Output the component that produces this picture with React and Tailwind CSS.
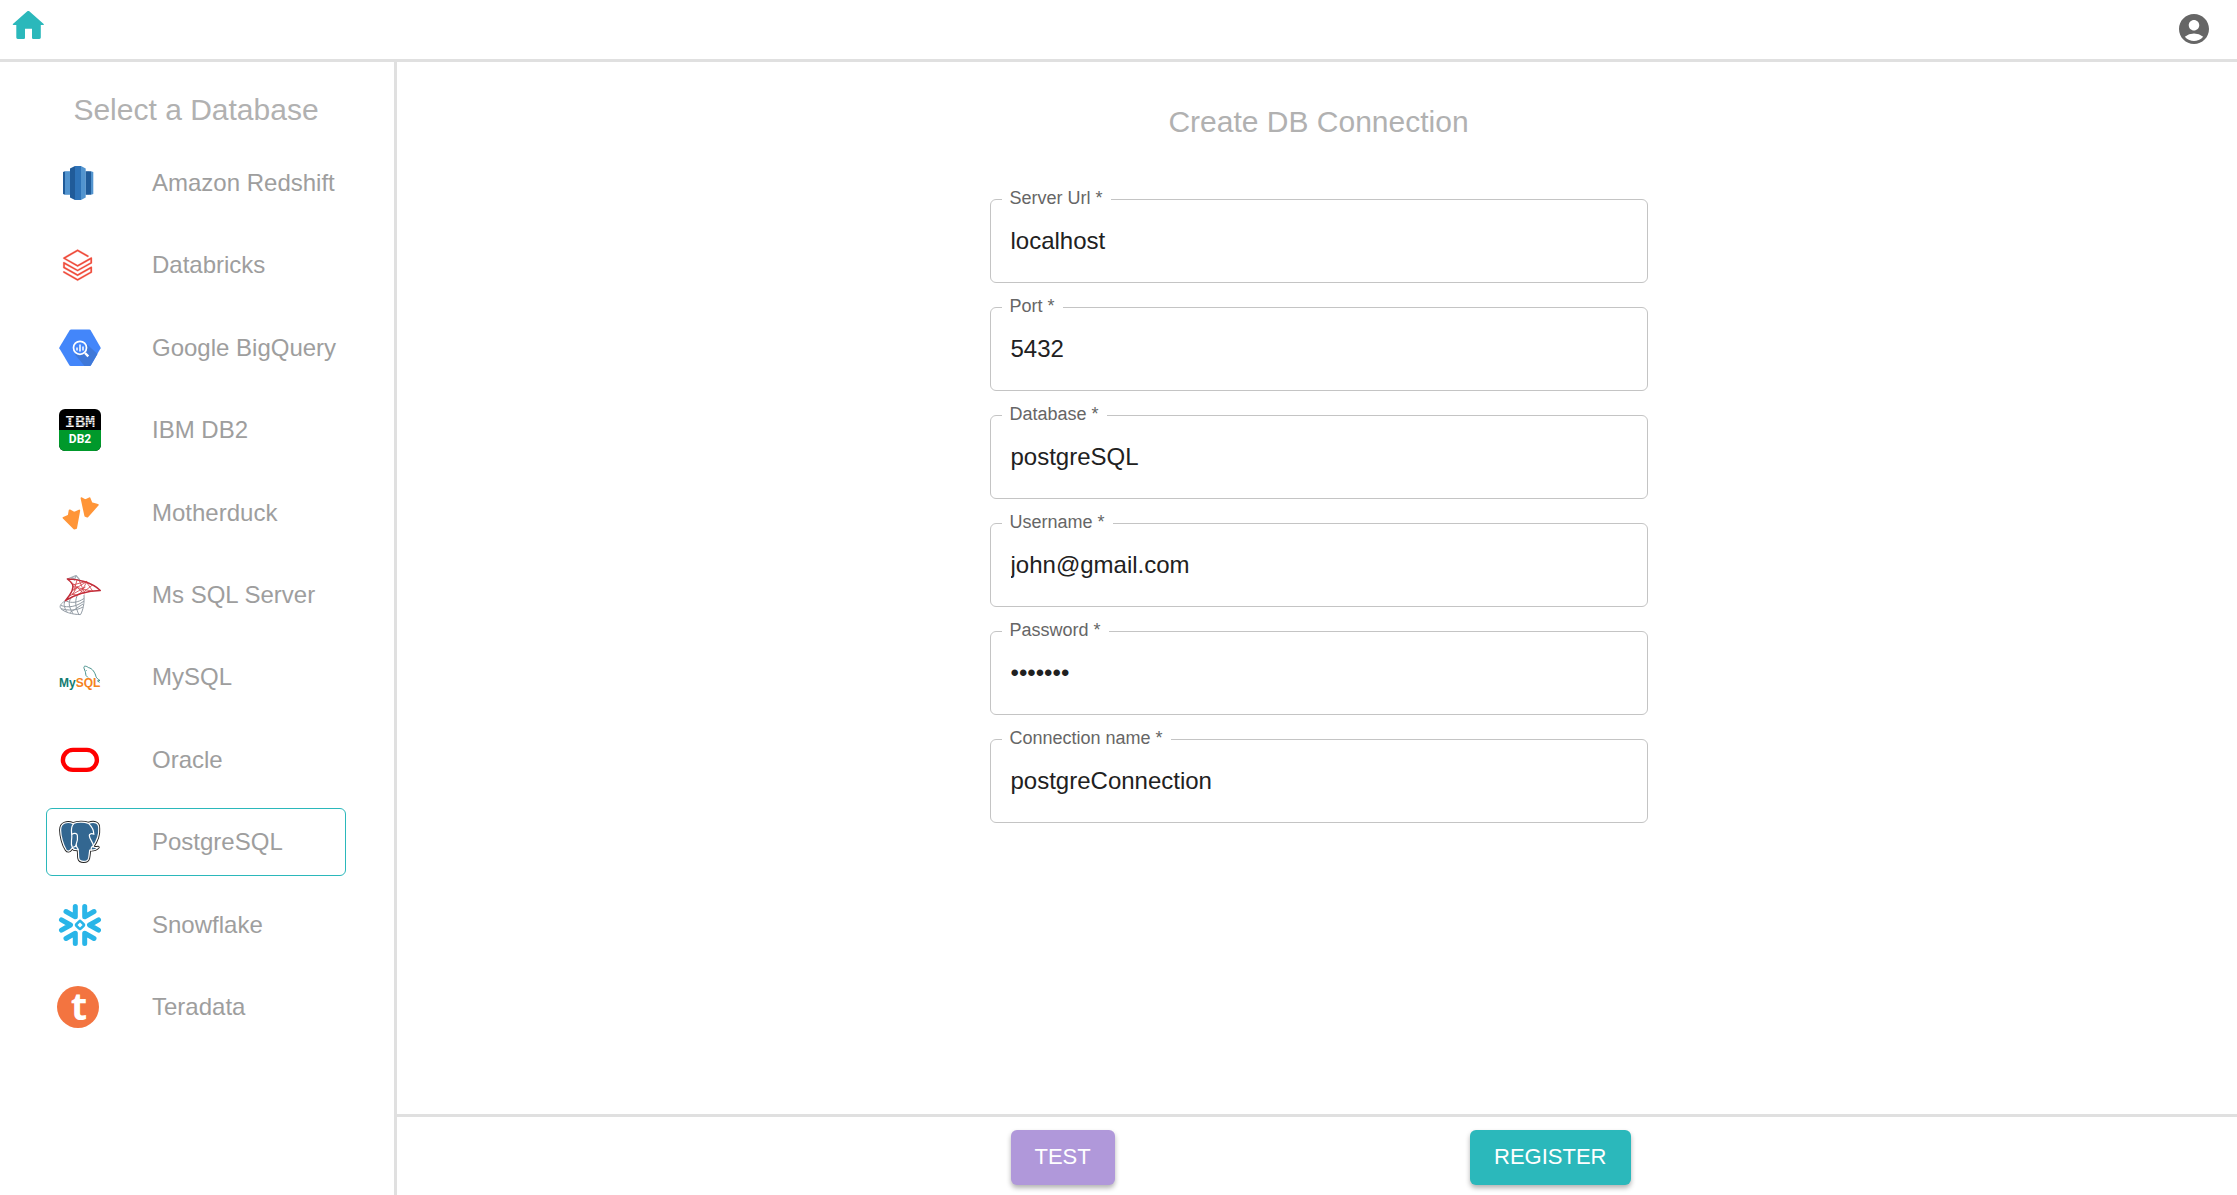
import { useState } from 'react';
import { MdAccountCircle } from 'react-icons/md';

function LogoFrame({ children }) {
    return (
        <svg viewBox="0 0 42 42" className="h-[42px] w-[42px] shrink-0 overflow-visible" aria-hidden="true">
            {children}
        </svg>
    );
}

function RedshiftLogo() {
    return (
        <LogoFrame>
            <path d="M4 10l2-.8v23.6L4 32z" fill="#205b99" />
            <path d="M6 9.200h5v23.600H6z" fill="#5294cf" />
            <path d="M26.500 9.200H30v23.600h-3.500z" fill="#205b99" />
            <path d="M30 9.200h2v23.600h-2z" fill="#205b99" />
            <path d="M32 9.200l2.300.8v22l-2.300.8z" fill="#5294cf" />
            <path d="M11 6.500l5-2.500v34l-5-2.500z" fill="#205b99" />
            <path d="M16 4h6v34h-6z" fill="#2e73b8" />
            <path d="M22 4l4.700 2.500v29L22 38z" fill="#5294cf" />
        </LogoFrame>
    );
}

function DatabricksLogo() {
    return (
        <LogoFrame>
            <path
                transform="translate(3 5.5) scale(1.3)"
                fill="#ef4b3a"
                stroke="#ef4b3a"
                strokeWidth=".2"
                d="M.95 14.184L12 20.403l9.919-5.55v2.21L12 22.662l-10.484-5.96-.565.308v.77L12 24l11.05-6.218v-4.317l-.515-.309L12 19.118l-9.867-5.653v-2.21L12 16.805l11.05-6.218V6.32l-.515-.308L12 11.974 2.647 6.681 12 1.388l7.76 4.368.668-.411v-.566L12 0 .95 6.27v.72L12 13.207l9.919-5.55v2.26L12 15.52 1.516 9.56l-.565.308z"
            />
        </LogoFrame>
    );
}

function BigQueryLogo() {
    return (
        <LogoFrame>
            <path d="M12 2.500h18.500L31.500 3 41.600 20.500v.8L31.800 38.500l-1 .5H11.500l-1-.5L.3 21.200v-.7L10.800 3z" fill="#4386fa" />
            <path d="M26.500 16L38.500 27 31.800 38.500l-1 .5h-5.300L16 27.500z" fill="#3f78d8" />
            <circle cx="21" cy="20.800" r="6.500" fill="#4386fa" stroke="#fff" strokeWidth="1.700" />
            <path d="M26 26l3.300 3.300" stroke="#fff" strokeWidth="2.400" />
            <path d="M18 20.500v3M21 17.500v7M24 19.500v4" stroke="#fff" strokeWidth="1.500" />
        </LogoFrame>
    );
}

function Db2Logo() {
    return (
        <LogoFrame>
            <rect width="42" height="42" rx="6" fill="#000" />
            <path d="M0 21h42v15a6 6 0 0 1-6 6H6a6 6 0 0 1-6-6z" fill="#00992b" />
            <text
                x="21"
                y="18"
                textAnchor="middle"
                className="font-['Liberation_Mono',monospace] text-[17px] font-bold"
                fill="#fff"
            >
                IBM
            </text>
            <path d="M4 8.700h34M4 11.200h34M4 13.700h34M4 16.200h34" stroke="#000" strokeWidth=".6" />
            <text x="21" y="34" textAnchor="middle" className="font-[Roboto,sans-serif] text-[12px] font-bold" fill="#fff">
                DB2
            </text>
        </LogoFrame>
    );
}

function MotherduckLogo() {
    return (
        <LogoFrame>
            <g fill="#ff9538" stroke="#ff9538" strokeWidth="2" strokeLinejoin="round">
                <path d="M4.600 25.800l5.200-2.200.9-5.200 4.500 2.400 5-2.200-3.200 17.500-1.900.3z" />
                <path d="M22.600 6.300l3.700 2 4.200-2 1.900 4.900 6.300 1.700-10.400 11.600-1.900-.6z" />
            </g>
        </LogoFrame>
    );
}

function SqlServerLogo() {
    return (
        <LogoFrame>
            <g fill="none" strokeLinejoin="round">
                <path
                    d="M8.300 5L17 1.500l3.800 4.300M12 4.500l7.300 1M13.500 3l2.200 3.500M17 1.500l-1.500 4.200"
                    stroke="#a3abb3"
                    strokeWidth="1.200"
                />
                <path
                    d="M6.300 26.700C2 29.500 0 32 1.800 34.500 5 38 13 40.500 21.500 40.600 24 36.500 25.600 29 25 21M6.300 26.700c-2 3.500-1.300 6 1.500 11M12 24c-3 4.500-2 9 1.800 15.600M18 22c-2.500 6-1 12.500 1.800 18.500M2 31.500C9 34 17 33 25 27M2 34.700C9 36.500 17 37 24 33M7 27c6 2.500 12 1.500 18-2.500M11 38.500L24 30"
                    stroke="#929ba4"
                    strokeWidth="1"
                />
                <path
                    d="M8.300 5c9-.2 24.700 3 33 11.500-11 .3-23.500 3-35 10.200C12 20 15.300 14 13.500 10.500 12.200 8 10.500 6.500 8.300 5z"
                    stroke="#c02a37"
                    strokeWidth="1.400"
                />
                <path
                    d="M10.500 6.500l15 13.500M13.500 11L28 7.300M14 16l14-8.500M18 6l-3 11M20 6l5 11.500M28 7.500l-7 12.500M27 7.500l7 10M34 10.500l-10 8M14 12.500l20 5M10.500 22l16-9M13 20l6 1.500M19 12l-6 9"
                    stroke="#d23b43"
                    strokeWidth=".8"
                />
            </g>
        </LogoFrame>
    );
}

function MySqlLogo() {
    return (
        <LogoFrame>
            <text x="0" y="31" className="font-['Liberation_Sans',sans-serif] text-[12px] font-bold" fill="#127b70">
                My<tspan fill="#f58220">SQL</tspan>
            </text>
            <path
                d="M29 21.500l-2-2c-.5-2-.3-3.500-1.300-5.500-.8-1.700-1.200-3.300-.2-3.700 1.500-.4 3 .5 4 1.300 4 .8 6.500 5 7.500 9 .7 1.700 2 2.500 4 4l-2.500.3 2 1.500M27.500 14v.6"
                fill="none"
                stroke="#33857f"
                strokeWidth=".9"
            />
        </LogoFrame>
    );
}

function OracleLogo() {
    return (
        <LogoFrame>
            <rect x="3.900" y="10.900" width="34" height="20" rx="10" fill="none" stroke="#f00" strokeWidth="4.400" />
        </LogoFrame>
    );
}

const elephantShape =
    'M14 2.600C9 .4 1.600 1.200 1.600 9c0 6 2.600 15.500 5.400 19.500 1.700 2.300 3.400 2 5-.2l1.200-1.500c1 1.400 3 2.200 6 1.900.4 3.500.2 6 .6 8.500.8 4.400 8.800 4.200 9.800.2.600-2.700.8-5.700 1.100-8.400 3.300.3 6.500-.5 8.500-2.700-1.700.2-4.500.4-5.500-.5 4-5.500 6.500-12.500 6-18C40.200 1.500 35 0 29.500 2.400c-4-1.600-11-1.800-15.500.2z';

function PostgresLogo() {
    return (
        <LogoFrame>
            <path d={elephantShape} fill="#222" stroke="#222" strokeWidth="3" strokeLinejoin="round" />
            <path d={elephantShape} fill="#336791" stroke="#fff" strokeWidth="1.200" strokeLinejoin="round" />
            <g fill="none" stroke="#fff" strokeWidth="1.200" strokeLinecap="round">
                <path d="M14.500 2.800c-3.500 3.500-1.700 8.500-1.700 12.500 0 4.500-1.500 7.500.5 11" />
                <path d="M13 13.200c2-1.400 5-1 5.300 1 .4 3.500.8 5-1 8.500-1 2 .5 3.500 2 5.500" />
                <path d="M29.800 2.600c3.500 3.500 5 7 5 10.500-2-.8-4.800-.3-4.500 1.500.3 4 4 7 4.200 10.500-2.500.3-2.500 2-2.300 4" />
                <path d="M13.500 26.500c2-.5 3.500-1.200 4-2.500" />
            </g>
        </LogoFrame>
    );
}

function SnowflakeLogo() {
    return (
        <LogoFrame>
            <g fill="none" stroke="#29b5e8" strokeWidth="5" strokeLinecap="round" strokeLinejoin="round">
                <path d="M16.300 2.500v10.300L7 7.500M25.700 2.500v10.300L35 7.500" />
                <path d="M16.300 39.500V29.200L7 34.500M25.700 39.500V29.200l9.300 5.300" />
                <path d="M2.500 15.800l9 5.200-9 5.200M39.500 15.800l-9 5.200 9 5.200" />
            </g>
            <rect
                x="17.900"
                y="17.900"
                width="6.200"
                height="6.200"
                rx="1"
                transform="rotate(45 21 21)"
                fill="none"
                stroke="#29b5e8"
                strokeWidth="2.600"
            />
        </LogoFrame>
    );
}

function TeradataLogo() {
    return (
        <LogoFrame>
            <circle cx="19" cy="21" r="21" fill="#f37440" />
            <text x="20" y="34" textAnchor="middle" className="font-['Open_Sans',sans-serif] text-[38px] font-bold" fill="#fff">
                t
            </text>
        </LogoFrame>
    );
}

const databases = [
    { name: 'Amazon Redshift', Logo: RedshiftLogo },
    { name: 'Databricks', Logo: DatabricksLogo },
    { name: 'Google BigQuery', Logo: BigQueryLogo },
    { name: 'IBM DB2', Logo: Db2Logo },
    { name: 'Motherduck', Logo: MotherduckLogo },
    { name: 'Ms SQL Server', Logo: SqlServerLogo },
    { name: 'MySQL', Logo: MySqlLogo },
    { name: 'Oracle', Logo: OracleLogo },
    { name: 'PostgreSQL', Logo: PostgresLogo },
    { name: 'Snowflake', Logo: SnowflakeLogo },
    { name: 'Teradata', Logo: TeradataLogo },
];

const fields = [
    { id: 'server', label: 'Server Url', value: 'localhost' },
    { id: 'port', label: 'Port', value: '5432' },
    { id: 'database', label: 'Database', value: 'postgreSQL' },
    { id: 'username', label: 'Username', value: 'john@gmail.com' },
    { id: 'password', label: 'Password', value: 'secret1', type: 'password' },
    { id: 'connection', label: 'Connection name', value: 'postgreConnection' },
];

function Field({ id, label, value, type = 'text' }) {
    return (
        <div className="relative">
            <label htmlFor={id} className="absolute -top-[13px] left-3 bg-white px-2 text-[18px] leading-6 text-[#666]">
                {label} *
            </label>
            <input
                id={id}
                type={type}
                defaultValue={value}
                required
                className="block h-[84px] w-full rounded-md border border-[#c4c4c4] px-5 text-[24px] text-[#212121] outline-none focus:border-[#2bb8bb]"
            />
        </div>
    );
}

export default function App() {
    const [selected, setSelected] = useState('PostgreSQL');

    return (
        <div className="flex min-h-screen flex-col bg-white font-['Liberation_Sans',Arial,sans-serif]">
            <header className="flex h-[62px] items-start justify-between border-b-3 border-[#e0e0e0] pt-[11px] pr-[25px] pl-3">
                <a href="#home" aria-label="Home">
                    <svg viewBox="0 0 32 28" className="h-7 w-8" fill="#2bb8bb" aria-hidden="true">
                        <path d="M15.300.3q1-.7 2 0L31.700 13q.6.9-.4 1.100h-2.500v12.500q0 1.400-1.400 1.400h-6.200q-1.200 0-1.200-1.200v-9h-7v9q0 1.200-1.200 1.200H5.700q-1.400 0-1.400-1.400V14.100H1.400q-1-.2-.5-1.100z" />
                    </svg>
                </a>
                <button type="button" aria-label="Account" className="text-[#666]">
                    <MdAccountCircle className="h-9 w-9" />
                </button>
            </header>

            <div className="flex flex-1">
                <aside className="w-[397px] shrink-0 border-r-3 border-[#e0e0e0] pl-[46px]">
                    <h2 className="w-[300px] pt-[30px] text-center text-[30px] leading-9 text-[#b1b1b1]">Select a Database</h2>
                    <nav className="mt-[21px] flex h-[892px] w-[300px] flex-col justify-between">
                        {databases.map(({ name, Logo }) => (
                            <button
                                key={name}
                                type="button"
                                aria-pressed={selected === name}
                                onClick={() => setSelected(name)}
                                className={`flex h-[68px] items-center gap-[51px] rounded-md border pl-3 text-left text-[24px] text-[#9e9e9e] ${
                                    selected === name ? 'border-[#2bb8bb]' : 'border-transparent'
                                }`}
                            >
                                <Logo />
                                {name}
                            </button>
                        ))}
                    </nav>
                </aside>

                <main className="flex flex-1 flex-col pl-[3px]">
                    <form id="connection-form" className="mx-auto flex w-[658px] max-w-full flex-1 flex-col gap-6 pt-10">
                        <h1 className="mb-[33px] text-center text-[30px] leading-10 text-[#b1b1b1]">Create DB Connection</h1>
                        {fields.map((field) => (
                            <Field key={field.id} {...field} />
                        ))}
                    </form>
                    <footer className="-ml-[3px] border-t-3 border-[#e0e0e0] pt-[13px] pb-[10px] pl-[3px]">
                        <div className="mx-auto flex w-[624px] max-w-full justify-between pl-1">
                            <button
                                type="button"
                                className="rounded-md bg-[#b098da] px-6 pt-[7px] pb-[9px] text-[22px] leading-[39px] text-white shadow-[0_3px_5px_rgba(0,0,0,0.3)]"
                            >
                                TEST
                            </button>
                            <button
                                type="submit"
                                form="connection-form"
                                className="rounded-md bg-[#2bb8bb] px-6 pt-[7px] pb-[9px] text-[22px] leading-[39px] text-white shadow-[0_3px_5px_rgba(0,0,0,0.3)]"
                            >
                                REGISTER
                            </button>
                        </div>
                    </footer>
                </main>
            </div>
        </div>
    );
}
